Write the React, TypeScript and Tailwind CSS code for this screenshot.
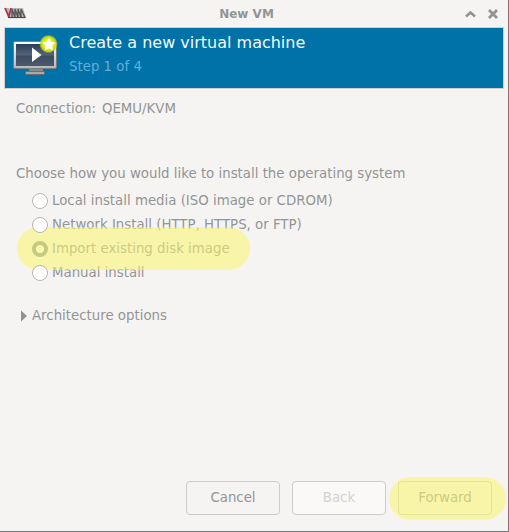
import type { ReactNode } from 'react';

function Logo() {
  return (
    <svg className="ml-1 h-[13px] w-[22px] shrink-0" viewBox="0 0 22 13">
      <path d="M1 1h4l1 6 1-6h12l3 9.500-1 .5H4z" fill="#b8b8b8" />
      <path d="M1 1l4 9M5 9l2-8" stroke="#b0344f" strokeWidth="1.800" fill="none" />
      <path d="M8 10V2l3 8.500V2l3 8.500V2l3 8.500V2l4 8.500" stroke="#555" strokeWidth="1.300" fill="none" />
      <path d="M4 10.500h17.500" stroke="#474747" strokeWidth="1.200" />
    </svg>
  );
}

function Monitor() {
  return (
    <svg className="mt-[6px] ml-[6px] h-[44px] w-[50px] shrink-0" viewBox="0 0 50 44">
      <defs>
        <linearGradient id="screen" x1="0" y1="0" x2="0" y2="1">
          <stop offset="0" stopColor="#2b3c55" />
          <stop offset="0.5" stopColor="#53637a" />
          <stop offset="0.55" stopColor="#3c4b61" />
          <stop offset="1" stopColor="#4d586b" />
        </linearGradient>
        <linearGradient id="bezel" x1="0" y1="0" x2="0" y2="1">
          <stop offset="0" stopColor="#ffffff" />
          <stop offset="1" stopColor="#b5b5b3" />
        </linearGradient>
        <radialGradient id="glow">
          <stop offset="0.55" stopColor="#e9f000" />
          <stop offset="0.8" stopColor="#c9dc16" stopOpacity="0.9" />
          <stop offset="1" stopColor="#7dbb50" stopOpacity="0" />
        </radialGradient>
      </defs>
      <path d="M18 33h14v4H18z" fill="#85898c" />
      <rect x="14.500" y="37.500" width="19" height="3" rx="1" fill="#a9aaa8" stroke="#696d70" />
      <rect x="2.500" y="7.500" width="43" height="27" rx="1.500" fill="url(#bezel)" stroke="#777d80" />
      <rect x="5" y="10" width="38" height="22" fill="url(#screen)" />
      <path d="M21 13.500v14.500l9.500-7z" fill="#fff" />
      <circle cx="37.500" cy="10" r="9.500" fill="url(#glow)" />
      <path d="M38 3.500l2 4.300 4.300.7-3.100 3.300.7 4.700-3.900-2.200-4.300 2.200.8-4.700-3.100-3.300 4.300-.7z" fill="#fff" />
    </svg>
  );
}

function Radio({ selected, children }: { selected?: boolean; children: ReactNode }) {
  return (
    <div className="flex h-6 items-center gap-1">
      <span
        className={
          selected
            ? 'size-4 rounded-full border-4 border-[#86969c] bg-white'
            : 'relative z-10 size-4 rounded-full border border-[#b9b4af] bg-white'
        }
      />
      <span>{children}</span>
    </div>
  );
}

export default function App() {
  return (
    <div className="flex h-[532px] w-[509px] flex-col border-r border-b border-[#777777] bg-[#f5f4f2] font-['DejaVu_Sans',sans-serif] text-[13.333px] leading-4 text-[#929595]">
      <header className="flex h-[27px] shrink-0 items-center">
        <Logo />
        <h1 className="ml-[58px] flex-1 pr-[54px] text-center text-[12px] font-bold text-[#929595]">New VM</h1>
        <svg className="h-4 w-10 shrink-0" viewBox="0 0 40 16" fill="none" stroke="#8f9393">
          <path d="M3 10.500l4.500-4 4.500 4" strokeWidth="2.500" />
          <path d="M26 4l8 8M34 4l-8 8" strokeWidth="2.800" />
        </svg>
        <span className="w-[5px]" />
      </header>
      <section className="ml-1 flex h-[62px] w-[500px] shrink-0 border border-[#d3cfcb] bg-[#0072a8]">
        <Monitor />
        <div className="ml-2 pt-[5px]">
          <h2 className="text-[16px] leading-5 text-[#f2f9fc]">Create a new virtual machine</h2>
          <p className="mt-[6px] text-[#5fafdc]">Step 1 of 4</p>
        </div>
      </section>
      <main className="flex flex-1 flex-col px-4 pt-[12px]">
        <div className="flex gap-[6px]"><span>Connection:</span><span>QEMU/KVM</span></div>
        <p className="mt-[49px]">Choose how you would like to install the operating system</p>
        <div className="mt-[7px] pl-4">
          <Radio>Local install media (ISO image or CDROM)</Radio>
          <Radio>Network Install (HTTP, HTTPS, or FTP)</Radio>
          <div className="relative">
            <Radio selected>Import existing disk image</Radio>
            <span className="absolute -top-[10px] -left-[15px] h-[43px] w-[233px] rounded-[22px] bg-[#faf56e]/55" />
          </div>
          <Radio>Manual install</Radio>
        </div>
        <div className="mt-[23px] flex items-center gap-1">
          <svg className="ml-1 h-3 w-2" viewBox="0 0 8 12"><path d="M1 0.500l6 5.500-6 5.500z" fill="#8f9393" /></svg>
          <span>Architecture options</span>
        </div>
      </main>
      <footer className="flex shrink-0 justify-end gap-3 pr-4 pb-4">
        <button className="h-[34px] w-[94px] rounded-[4px] border border-[#cfcbc7]">Cancel</button>
        <button className="h-[34px] w-[94px] rounded-[4px] border border-[#cfcbc7] bg-[#faf9f8] text-[#d2d1ce]">Back</button>
        <div className="relative">
          <button className="h-[34px] w-[94px] rounded-[4px] border border-[#cfcbc7]">Forward</button>
          <span className="absolute -top-1 -left-[9px] h-[43px] w-[117px] rounded-[22px] bg-[#faf56e]/55" />
        </div>
      </footer>
    </div>
  );
}
